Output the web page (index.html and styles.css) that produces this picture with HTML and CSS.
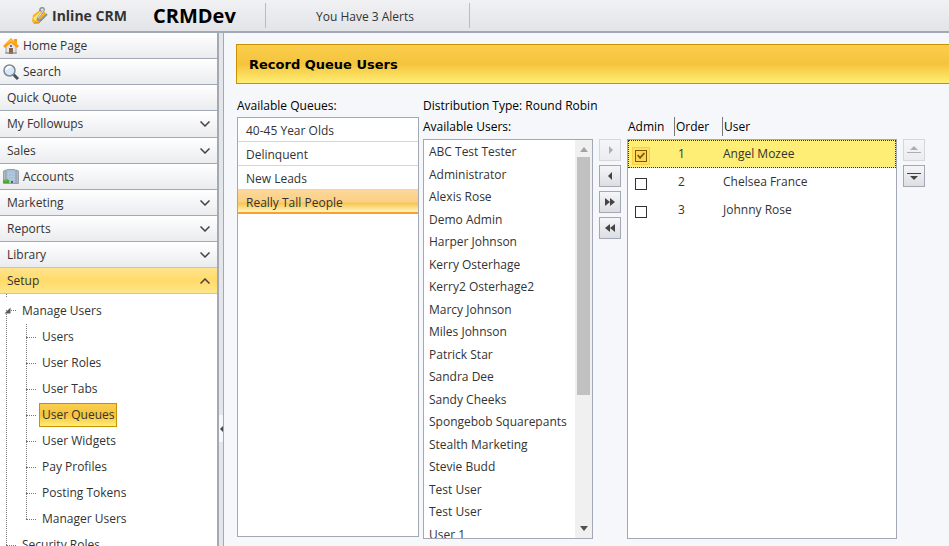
FILE: index.html
```html
<!DOCTYPE html>
<html lang="en">
<head>
    <meta charset="UTF-8">
    <meta name="viewport" content="width=device-width, initial-scale=1.0">
    <title>Inline CRM</title>
    <link rel="stylesheet" href="styles.css">
</head>
<body>
    <header class="topbar">
        <svg class="logo" width="18" height="18" viewBox="0 0 18 18">
            <path d="M2 8 L9 3 L13 4 L16 8 L8 16 L3 17 L1 14 Z" fill="#f9b51c"/>
            <path d="M2 11 L9 5 L11 7 L4 14 Z" fill="#ffe37a"/>
            <path d="M9 4 C9 0 13 0 13 3 L7 11 C6 14 9 14 11 12 L16 7" fill="none" stroke="#8e949c" stroke-width="2"/>
            <path d="M10 3 C11 1 13 2 12 4 L7 11" fill="none" stroke="#e9edf2" stroke-width="1"/>
            <path d="M3 16 L8 16 L14 10" fill="none" stroke="#dd8713" stroke-width="1"/>
        </svg>
        <span class="brand">Inline CRM</span>
        <span class="site">CRMDev</span>
        <a href="#" class="alerts">You Have 3 Alerts</a>
    </header>
    <div class="layout">
        <nav class="sidebar">
            <ul class="panelbar">
                <li><a href="#" class="panel with-icon">
                    <svg width="16" height="16" viewBox="0 0 16 16">
                        <path d="M3 8 L8 3 L13 8 V15 H3 Z" fill="#e9e7e4" stroke="#a9a49e"/>
                        <path d="M11 1 H14 V6 L11 4 Z" fill="#fb9f14"/>
                        <path d="M8 0 L16 8 L14 10 L8 5 L2 10 L0 8 Z" fill="#fb9f14"/>
                        <path d="M8 1 L14 7 L8 3 L2 7 Z" fill="#ffc04a"/>
                        <rect x="6" y="10" width="4" height="6" fill="#8a6444"/>
                        <rect x="7" y="7" width="2" height="2" fill="#58779b"/>
                        <path d="M2 15 H14" stroke="#8d8780"/>
                    </svg>Home Page</a></li>
                <li><a href="#" class="panel with-icon">
                    <svg width="16" height="16" viewBox="0 0 16 16">
                        <path d="M10 10 L15 15" stroke="#4b5057" stroke-width="3"/>
                        <circle cx="6.5" cy="6.5" r="5.5" fill="#d6e6fb" stroke="#7d8894" stroke-width="1.5"/>
                        <path d="M3 6 A4 4 0 0 1 8 3" fill="none" stroke="#ffffff" stroke-width="2"/>
                    </svg>Search</a></li>
                <li><a href="#" class="panel">Quick Quote</a></li>
                <li><a href="#" class="panel first-group">My Followups<svg class="chevron" width="10" height="6" viewBox="0 0 10 6"><path d="M0.5 0.5 L5 5 L9.5 0.5"/></svg></a></li>
                <li><a href="#" class="panel">Sales<svg class="chevron" width="10" height="6" viewBox="0 0 10 6"><path d="M0.5 0.5 L5 5 L9.5 0.5"/></svg></a></li>
                <li><a href="#" class="panel with-icon">
                    <svg width="16" height="16" viewBox="0 0 16 16">
                        <path d="M0.5 2 L3 1 V14.5 H0.5 Z M13 1 L15.5 2 V14.5 H13 Z" fill="#b3bac1" stroke="#9a9fa5"/>
                        <path d="M4 0.5 H12 L13 2 V14.5 H3 V2 Z" fill="#a6bfd6" stroke="#94a3b2"/>
                        <path d="M5.5 2 V14 M8 2 V14 M10.5 2 V14 M4 4.5 H12 M4 7.5 H12 M4 10.5 H12" stroke="#b9cede" stroke-width="0.6"/>
                        <path d="M0 14 V12 L3 10 L6 11 L6 14 Z" fill="#4aa52c"/>
                        <path d="M2 12 L4 11" stroke="#8ad25f"/>
                        <rect x="8" y="12" width="2" height="2" fill="#4e6477"/>
                    </svg>Accounts</a></li>
                <li><a href="#" class="panel">Marketing<svg class="chevron" width="10" height="6" viewBox="0 0 10 6"><path d="M0.5 0.5 L5 5 L9.5 0.5"/></svg></a></li>
                <li><a href="#" class="panel">Reports<svg class="chevron" width="10" height="6" viewBox="0 0 10 6"><path d="M0.5 0.5 L5 5 L9.5 0.5"/></svg></a></li>
                <li><a href="#" class="panel before-open">Library<svg class="chevron" width="10" height="6" viewBox="0 0 10 6"><path d="M0.5 0.5 L5 5 L9.5 0.5"/></svg></a></li>
                <li><a href="#" class="panel open">Setup<svg class="chevron" width="10" height="6" viewBox="0 0 10 6"><path d="M0.5 5.5 L5 1 L9.5 5.5"/></svg></a></li>
            </ul>
            <ul class="tree">
                <li>
                    <div class="node root"><svg class="expander" width="7" height="7" viewBox="0 0 7 7"><path d="M6.5 0.5 V6.5 H0.5 Z" fill="#595959"/></svg><a href="#">Manage Users</a></div>
                    <ul class="subtree">
                        <li class="node"><a href="#">Users</a></li>
                        <li class="node"><a href="#">User Roles</a></li>
                        <li class="node"><a href="#">User Tabs</a></li>
                        <li class="node"><a href="#" class="selected">User Queues</a></li>
                        <li class="node"><a href="#">User Widgets</a></li>
                        <li class="node"><a href="#">Pay Profiles</a></li>
                        <li class="node"><a href="#">Posting Tokens</a></li>
                        <li class="node"><a href="#">Manager Users</a></li>
                    </ul>
                </li>
                <li>
                    <div class="node leaf"><a href="#">Security Roles</a></div>
                </li>
            </ul>
        </nav>
        <div class="splitter">
            <button class="collapse" aria-label="Collapse menu"><svg width="3" height="6" viewBox="0 0 3 6"><path d="M3 0 V6 L0 3 Z" fill="#444"/></svg></button>
        </div>
        <main class="content">
            <h1 class="banner">Record Queue Users</h1>
            <div class="columns">
                <section class="queues">
                    <h2 class="label">Available Queues:</h2>
                    <ul class="box queue-list">
                        <li>40-45 Year Olds</li>
                        <li>Delinquent</li>
                        <li>New Leads</li>
                        <li class="selected">Really Tall People</li>
                    </ul>
                </section>
                <section class="distribution">
                    <p class="label">Distribution Type: Round Robin</p>
                    <div class="transfer">
                        <div class="available">
                            <h2 class="label">Available Users:</h2>
                            <div class="box user-box">
                                <ul class="user-list">
                                    <li>ABC Test Tester</li>
                                    <li>Administrator</li>
                                    <li>Alexis Rose</li>
                                    <li>Demo Admin</li>
                                    <li>Harper Johnson</li>
                                    <li>Kerry Osterhage</li>
                                    <li>Kerry2 Osterhage2</li>
                                    <li>Marcy Johnson</li>
                                    <li>Miles Johnson</li>
                                    <li>Patrick Star</li>
                                    <li>Sandra Dee</li>
                                    <li>Sandy Cheeks</li>
                                    <li>Spongebob Squarepants</li>
                                    <li>Stealth Marketing</li>
                                    <li>Stevie Budd</li>
                                    <li>Test User</li>
                                    <li>Test User</li>
                                    <li>User 1</li>
                                </ul>
                                <div class="scrollbar">
                                    <svg width="8" height="5" viewBox="0 0 8 5"><path d="M0 5 L4 0 L8 5 Z" fill="#a3a3a3"/></svg>
                                    <div class="thumb"></div>
                                    <svg width="8" height="5" viewBox="0 0 8 5"><path d="M0 0 L4 5 L8 0 Z" fill="#505050"/></svg>
                                </div>
                            </div>
                        </div>
                        <div class="buttons">
                            <button disabled aria-label="Add"><svg width="12" height="10" viewBox="0 0 12 10"><path d="M5 1 V9 L9 5 Z"/></svg></button>
                            <button aria-label="Remove"><svg width="12" height="10" viewBox="0 0 12 10"><path d="M8 1 V9 L4 5 Z"/></svg></button>
                            <button aria-label="Add all"><svg width="12" height="10" viewBox="0 0 12 10"><path d="M1 1 V9 L6 5 Z M6 1 V9 L11 5 Z"/></svg></button>
                            <button aria-label="Remove all"><svg width="12" height="10" viewBox="0 0 12 10"><path d="M6 1 V9 L1 5 Z M11 1 V9 L6 5 Z"/></svg></button>
                        </div>
                        <table class="assigned">
                            <thead>
                                <tr><th>Admin</th><th>Order</th><th>User</th></tr>
                            </thead>
                            <tbody class="box">
                                <tr class="selected"><td><input type="checkbox" aria-label="Angel Mozee is admin" checked></td><td>1</td><td>Angel Mozee</td></tr>
                                <tr><td><input type="checkbox" aria-label="Chelsea France is admin"></td><td>2</td><td>Chelsea France</td></tr>
                                <tr><td><input type="checkbox" aria-label="Johnny Rose is admin"></td><td>3</td><td>Johnny Rose</td></tr>
                            </tbody>
                        </table>
                        <div class="buttons">
                            <button disabled aria-label="Move up"><svg width="14" height="10" viewBox="0 0 14 10"><path d="M3 5 L7 1 L11 5 Z M0 7 H14 V8 H0 Z"/></svg></button>
                            <button aria-label="Move down"><svg width="14" height="10" viewBox="0 0 14 10"><path d="M3 5 L7 9 L11 5 Z M0 2 H14 V3 H0 Z"/></svg></button>
                        </div>
                    </div>
                </section>
            </div>
        </main>
    </div>
</body>
</html>
```
FILE: styles.css
```css
* {
    box-sizing: border-box;
}
body {
    display: flex;
    flex-direction: column;
    height: 100vh;
    margin: 0;
    overflow: hidden;
    background-color: #f5f7fa;
    color: #333;
    font-family: "Segoe UI", "Open Sans", "Noto Sans", sans-serif;
    font-size: 12px;
    line-height: 20px;
}
ul {
    list-style: none;
    margin: 0;
    padding: 0;
}
a {
    color: inherit;
    text-decoration: none;
}

/* top bar */
.topbar {
    display: flex;
    align-items: center;
    flex: none;
    height: 33px;
    padding-left: 31px;
    background: linear-gradient(#f1f1f3, #e2e4e8);
    border-bottom: 2px solid #a3a9b4;
}
.logo {
    margin-right: 3px;
}
.brand {
    width: 101px;
    font-size: 14px;
    font-weight: bold;
    white-space: nowrap;
}
.site {
    width: 112px;
    color: #000;
    font-size: 20px;
    font-weight: bold;
}
.alerts {
    width: 205px;
    height: 25px;
    padding: 4px 0 0 50px;
    border-left: 1px solid #bbb;
    border-right: 1px solid #bbb;
}

/* left menu */
.layout {
    display: flex;
    flex: 1;
    min-height: 0;
}
.sidebar {
    flex: none;
    width: 219px;
    overflow: hidden;
    background-color: #fff;
    border-right: 2px solid #a3a9b4;
}
.panel {
    display: flex;
    align-items: center;
    height: 26px;
    padding: 0 7px;
    background: linear-gradient(#fff, #ebecef);
    border-bottom: 1px solid #a3a9b4;
}
.with-icon {
    gap: 4px;
    padding-left: 3px;
}
.first-group {
    height: 27px;
}
.before-open {
    border-bottom-color: #ffc912;
}
.open {
    background: linear-gradient(#ffe490, #ffdb67 50%, #ffe68e);
    border-bottom-color: #ffc912;
}
.chevron {
    margin-left: auto;
    fill: none;
    stroke: #444;
    stroke-width: 1.5;
}
.tree {
    margin-left: 6px;
    padding-top: 3px;
    background: linear-gradient(#777 50%, transparent 50%) 0 0 / 1px 2px repeat-y;
}
.node {
    display: flex;
    align-items: center;
    height: 26px;
}
.node a {
    padding: 1px 2px;
    border: 1px solid transparent;
    white-space: nowrap;
}
.node::before {
    content: "";
    width: 10px;
    margin-right: 3px;
    border-top: 1px dotted #777;
}
.root {
    height: 27px;
    background: linear-gradient(#fff 50%, transparent 50%);
}
.root::before {
    order: 1;
    width: 5px;
}
.root a {
    order: 2;
}
.expander {
    margin-left: -2px;
}
.subtree {
    margin-left: 20px;
    background: linear-gradient(#777 50%, transparent 50%) 0 0 / 1px 2px repeat-y;
}
.subtree .node:last-child {
    background: linear-gradient(transparent 50%, #fff 50%);
}
.node .selected {
    background: linear-gradient(#facd4c, #f4c43c 50%, #ffee75);
    border-color: #c89100;
}
.splitter {
    flex: none;
    width: 5px;
    padding-top: 382px;
    background-color: #e4e6ea;
    border-right: 1px solid #a3a9b4;
}
.collapse {
    display: flex;
    align-items: center;
    width: 4px;
    height: 27px;
    padding: 0 0 0 1px;
    background-color: #f5f7fa;
    border: 0;
}

/* page */
.content {
    flex: 1;
    min-width: 0;
    padding: 11px 0 0 12px;
    color: #000;
}
.banner {
    margin: 0;
    padding: 10px 12px 8px;
    background: linear-gradient(#facd4c, #f4c43c 50%, #ffee75);
    border: 1px solid #c89100;
    border-right: 0;
    font-family: Verdana, "DejaVu Sans", sans-serif;
    font-size: 13px;
    line-height: 20px;
}
.columns {
    display: flex;
    gap: 4px;
    padding: 12px 0 0 1px;
}
.label {
    margin: 0;
    font-size: 12px;
    font-weight: normal;
    line-height: 20px;
    padding-bottom: 1px;
}
.box {
    background-color: #fff;
    border: 1px solid #a3a9b4;
    color: #333;
}
.queue-list {
    width: 182px;
    height: 420px;
}
.queue-list li {
    height: 24px;
    padding: 3px 8px 0;
    border-bottom: 1px solid #d3d8df;
}
.queue-list .selected {
    background: linear-gradient(#fdd89a, #fbcf83 55%, #f7c64b 60%, #fff0b8 95%);
    border-bottom: 2px solid #f9a22b;
}
.transfer {
    display: flex;
}
.user-box {
    display: flex;
    width: 170px;
    height: 400px;
    margin-top: 1px;
    overflow: hidden;
}
.user-list {
    flex: 1;
    padding-left: 5px;
    white-space: nowrap;
}
.user-list li {
    height: 23px;
    line-height: 23px;
}
.user-list li:nth-child(even) {
    height: 22px;
}
.scrollbar {
    display: flex;
    flex-direction: column;
    align-items: center;
    width: 17px;
    padding: 7px 0;
    background-color: #f0f0f0;
}
.thumb {
    width: 13px;
    height: 238px;
    margin: 5px 0 auto;
    background-color: #c1c1c1;
}
.buttons {
    display: flex;
    flex-direction: column;
    gap: 4px;
    padding: 22px 6px 0;
}
.buttons button {
    display: flex;
    align-items: center;
    justify-content: center;
    width: 22px;
    height: 22px;
    padding: 0;
    background: linear-gradient(#f5f6f8, #dcdee2);
    border: 1px solid #a3a9b4;
    fill: #444;
}
.buttons button:disabled {
    opacity: 0.4;
}

/* users in the queue */
.assigned {
    display: block;
    width: 270px;
}
.assigned thead,
.assigned tbody {
    display: block;
}
.assigned tbody {
    height: 400px;
}
.assigned tr {
    display: flex;
    align-items: center;
}
.assigned thead tr {
    height: 22px;
    padding-bottom: 4px;
}
.assigned th {
    padding: 1px 1px 0;
    font-weight: normal;
    text-align: left;
    line-height: 18px;
}
.assigned th + th {
    border-left: 1px solid #777;
}
.assigned th:nth-child(1) {
    width: 47px;
}
.assigned th:nth-child(2) {
    width: 48px;
}
.assigned tbody tr {
    height: 28px;
}
.assigned tbody .selected {
    background-color: #ffee75;
    outline: 1px dotted #333;
    outline-offset: -1px;
}
.assigned td {
    padding: 0;
}
.assigned td:nth-child(1) {
    display: flex;
    width: 50px;
    padding: 4px 0 0 7px;
}
.assigned td:nth-child(2) {
    width: 45px;
}
.assigned input {
    appearance: none;
    width: 12px;
    height: 12px;
    margin: 0;
    background-color: #fff;
    border: 1px solid #333;
}
.assigned input:checked {
    background-color: #fbd558;
    border-color: #7a5a00;
    box-shadow: 0 0 0 2px #ffe162, 0 0 0 3px #f9cf4a;
}
.assigned input:checked::before {
    content: "";
    display: block;
    width: 8px;
    height: 8px;
    margin: 1px;
    background-color: #7a5a00;
    clip-path: polygon(0 45%, 15% 30%, 38% 55%, 85% 5%, 100% 20%, 38% 90%);
}
```
